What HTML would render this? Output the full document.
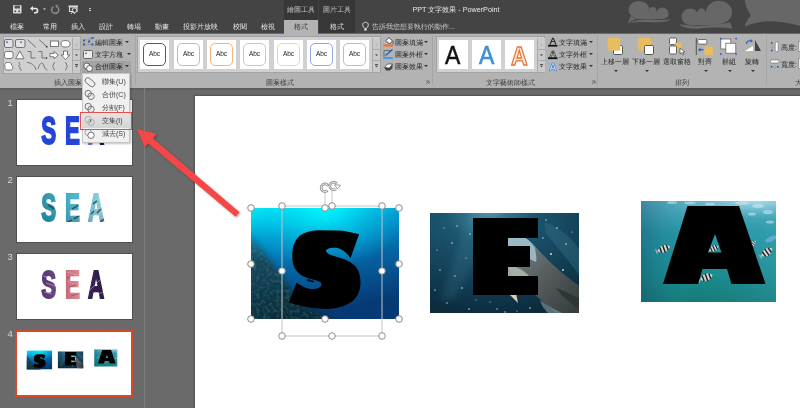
<!DOCTYPE html>
<html><head><meta charset="utf-8">
<style>
*{margin:0;padding:0;box-sizing:border-box}
html,body{width:800px;height:408px;overflow:hidden;background:#6a6a6a;font-family:"Liberation Sans",sans-serif}
#root{position:absolute;left:0;top:0;width:800px;height:408px;will-change:transform}
.a{position:absolute}
.tab{position:absolute;top:22px;font-size:7px;line-height:9px;color:#e6e6e6;white-space:nowrap}
.rt{position:absolute;font-size:7px;line-height:9px;color:#1e1e1e;white-space:nowrap;font-weight:500}
.gl{position:absolute;top:78px;font-size:7px;line-height:9px;color:#3a3a3a;white-space:nowrap}
.vdiv{position:absolute;top:35px;width:1px;height:50px;background:#a5a5a5}
.gal{position:absolute;background:#d0d0d0;border:1px solid #a4a4a4;border-top:1.6px solid #a0a0a0}
.tile{position:absolute;top:40px;width:29px;height:29px;background:#fff}
.tile i{position:absolute;left:3px;top:3px;width:23px;height:23px;border-radius:5px;border:1px solid #555;font-style:normal;font-size:6.5px;line-height:20px;text-align:center;color:#1a1a1a}
.scr{position:absolute;width:8px;background:#cacaca;border-left:1px solid #a8a8a8}
.thumb{position:absolute;left:15.5px;width:117.5px;height:67.5px;background:#fff;border:1.5px solid #505050;overflow:hidden}
.num{position:absolute;left:7.5px;font-size:9.5px;line-height:10px;color:#d8d8d8}
.tl{position:absolute;font-weight:bold;font-size:40px;line-height:40px;transform-origin:0 0;color:#2244d8}
.clip{-webkit-background-clip:text;background-clip:text;color:transparent}
.dd{position:absolute;width:0;height:0;border-left:2px solid transparent;border-right:2px solid transparent;border-top:2px solid #333}
</style></head><body><div id="root">
<div class="a" style="left:0;top:0;width:800px;height:33px;background:#444"></div>
<svg class="a" style="left:600px;top:0" width="200" height="33" viewBox="600 0 200 33">
<g fill="#676767">
<ellipse cx="639" cy="9.8" rx="10.5" ry="8.8"/><circle cx="652.8" cy="10.5" r="3.4"/><ellipse cx="662.4" cy="13.4" rx="6.2" ry="5.8"/>
<path d="M636,12 H664 V19 H636 Z"/>
<path d="M631,16 L636,19 C634,20 630,21.5 628,23 C628.5,20.5 629.5,18 631,16 Z"/>
<path d="M628,23 C635,19.5 645,19 655,19.8 C662,20.3 667,20 670.6,19.3 C669,21.5 662,22.6 652,22.2 C642,21.8 634,22 628,23 Z"/>
<ellipse cx="690.1" cy="16.8" rx="8.6" ry="8.2"/><circle cx="701.5" cy="11.8" r="3.5"/><ellipse cx="719" cy="12.2" rx="13.1" ry="11.4"/>
<path d="M690,12 H722 V25 H690 Z"/>
<path d="M679,24.3 C690,26 700,26 712,25 C722,24 728,23 730,22 C731,25 732,27 732.5,28.6 C722,27.5 712,27 700,28.5 C690,29.5 683,28 679,24.3 Z"/>
<path d="M745,0 H800 V26 C790,23 775,20.5 764,21.5 C755,22.5 748,25 745,26.5 C745.5,22 749,18 751,15 C748,11 745,6 745,0 Z"/>
</g>
</svg>
<div class="a" style="left:284px;top:0;width:34px;height:33px;background:#373737"></div>
<div class="a" style="left:319px;top:0;width:36px;height:33px;background:#373737"></div>
<div class="a" style="left:284px;top:19.5px;width:34px;height:15px;background:#b3b3b3"></div>
<div class="tab" style="left:287px;top:5px;color:#c4c4c4">繪圖工具</div>
<div class="tab" style="left:323px;top:5px;color:#c4c4c4">圖片工具</div>
<div class="tab" style="left:10px;">檔案</div>
<div class="tab" style="left:43px;">常用</div>
<div class="tab" style="left:71px;">插入</div>
<div class="tab" style="left:99px;">設計</div>
<div class="tab" style="left:127px;">轉場</div>
<div class="tab" style="left:155px;">動畫</div>
<div class="tab" style="left:183px;">投影片放映</div>
<div class="tab" style="left:233px;">校閱</div>
<div class="tab" style="left:261px;">檢視</div>
<div class="tab" style="left:330px;">格式</div>
<div class="tab" style="left:294px;color:#333">格式</div>
<div class="tab" style="left:372px;color:#c8c8c8">告訴我您想要執行的動作...</div>
<div class="tab" style="left:412.5px;top:4.8px;color:#e8e8e8;font-size:7.2px">PPT 文字效果 - PowerPoint</div>
<svg class="a" style="left:0;top:0" width="380" height="33" viewBox="0 0 380 33">
<g>
<rect x="13" y="5" width="8.5" height="8.5" rx="1" fill="#dcdcdc"/>
<rect x="14.5" y="5.5" width="5.5" height="3" fill="#555"/>
<rect x="14.5" y="10.5" width="1.6" height="1.6" fill="#444"/><rect x="18.3" y="10.5" width="1.6" height="1.6" fill="#444"/>
<path d="M31.5,8.5 H35.5 C38,8.5 38.5,12.5 35.5,12.8 H34" fill="none" stroke="#e8e8e8" stroke-width="1.6"/>
<path d="M30,8.5 L33,6 L33,11 Z" fill="#e8e8e8"/>
<path d="M43,8.5 H46 L44.5,10 Z" fill="#ddd"/>
<path d="M57.5,7 A3.6,3.6 0 1 1 53.5,6.6" fill="none" stroke="#8c8c8c" stroke-width="1.5"/>
<path d="M55.5,4.5 L58.5,5.5 L56,8 Z" fill="#8c8c8c"/>
<rect x="68.5" y="5.5" width="9.5" height="1.4" fill="#e0e0e0"/>
<path d="M69.5,7 H77 V11.5 H69.5 Z" fill="none" stroke="#e0e0e0" stroke-width="1.1"/>
<circle cx="74.5" cy="10.2" r="2.3" fill="#444" stroke="#e0e0e0" stroke-width="1"/>
<path d="M71,14 L73,11.5 L75,14" fill="none" stroke="#e0e0e0" stroke-width="1"/>
<rect x="89" y="8.2" width="2" height="0.9" fill="#ddd"/><rect x="89" y="10" width="2" height="0.9" fill="#ddd"/>
<path d="M364.5,28.3 C362,26.3 362,22.3 365.5,22.3 C369,22.3 369,26.3 366.5,28.3 Z" fill="none" stroke="#e0e0e0" stroke-width="1"/>
<rect x="364.3" y="28.8" width="2.4" height="1.8" fill="#e0e0e0"/>
</g>
</svg>
<div class="a" style="left:0;top:33.6px;width:800px;height:54.4px;background:#b3b3b3"></div>
<div class="gl" style="left:54px">插入圖案</div>
<div class="gl" style="left:266px">圖案樣式</div>
<div class="gl" style="left:486px">文字藝術師樣式</div>
<div class="gl" style="left:675px">排列</div>
<div class="gl" style="left:795px">大</div>
<div class="vdiv" style="left:135px"></div>
<div class="vdiv" style="left:432px"></div>
<div class="vdiv" style="left:597px"></div>
<div class="vdiv" style="left:766px"></div>
<div class="gal" style="left:3px;top:36.2px;width:78px;height:37.8px"></div>
<div class="scr" style="left:72px;top:38px;height:35px"></div>
<div class="a" style="left:73px;top:49px;width:7px;height:1px;background:#aaa"></div>
<div class="a" style="left:73px;top:60px;width:7px;height:1px;background:#aaa"></div>
<div class="a" style="left:82px;top:61px;width:49px;height:13px;background:#a3a3a3"></div>
<div class="rt" style="left:95px;top:38px">編輯圖案</div>
<div class="rt" style="left:95px;top:50px">文字方塊</div>
<div class="rt" style="left:95px;top:62px">合併圖案</div>
<div class="gal" style="left:137px;top:36.2px;width:244px;height:36.8px"></div>
<div class="scr" style="left:372px;top:38px;height:34px"></div>
<div class="a" style="left:373px;top:49px;width:7px;height:1px;background:#aaa"></div>
<div class="a" style="left:373px;top:60px;width:7px;height:1px;background:#aaa"></div>
<div class="tile" style="left:140px"><i style="border-color:#595959">Abc</i></div>
<div class="tile" style="left:174px"><i style="border-color:#9dc3e6">Abc</i></div>
<div class="tile" style="left:207px"><i style="border-color:#f4b183">Abc</i></div>
<div class="tile" style="left:240px"><i style="border-color:#c9c9c9">Abc</i></div>
<div class="tile" style="left:274px"><i style="border-color:#ffd966">Abc</i></div>
<div class="tile" style="left:307px"><i style="border-color:#8faadc">Abc</i></div>
<div class="tile" style="left:340px"><i style="border-color:#a9d18e">Abc</i></div>
<div class="rt" style="left:395px;top:38px">圖案填滿</div>
<div class="rt" style="left:395px;top:50px">圖案外框</div>
<div class="rt" style="left:395px;top:62px">圖案效果</div>
<div class="gal" style="left:436px;top:36.2px;width:109px;height:36.8px"></div>
<div class="scr" style="left:537px;top:38px;height:34px"></div>
<div class="a" style="left:538px;top:49px;width:7px;height:1px;background:#aaa"></div>
<div class="a" style="left:538px;top:60px;width:7px;height:1px;background:#aaa"></div>
<div class="tile" style="left:439px"></div>
<div class="tile" style="left:472px"></div>
<div class="tile" style="left:505px"></div>
<div class="rt" style="left:559px;top:38px">文字填滿</div>
<div class="rt" style="left:559px;top:50px">文字外框</div>
<div class="rt" style="left:559px;top:62px">文字效果</div>
<div class="rt" style="left:601px;top:57px">上移一層</div>
<div class="rt" style="left:632px;top:57px">下移一層</div>
<div class="rt" style="left:663px;top:57px">選取窗格</div>
<div class="rt" style="left:698px;top:57px">對齊</div>
<div class="rt" style="left:722px;top:57px">群組</div>
<div class="rt" style="left:745px;top:57px">旋轉</div>
<div class="rt" style="left:781px;top:43px">高度:</div>
<div class="rt" style="left:781px;top:60px">寬度:</div>
<div class="a" style="left:798px;top:41px;width:4px;height:11px;background:#e8e8e8;border:1px solid #999"></div>
<div class="a" style="left:798px;top:58px;width:4px;height:11px;background:#e8e8e8;border:1px solid #999"></div>
<div class="dd" style="left:124.5px;top:41px"></div>
<div class="dd" style="left:127px;top:53px"></div>
<div class="dd" style="left:124.5px;top:65px"></div>
<div class="dd" style="left:424px;top:41px"></div>
<div class="dd" style="left:424px;top:53px"></div>
<div class="dd" style="left:424px;top:65px"></div>
<div class="dd" style="left:589px;top:41px"></div>
<div class="dd" style="left:589px;top:53px"></div>
<div class="dd" style="left:589px;top:65px"></div>
<div class="dd" style="left:614px;top:69.5px"></div>
<div class="dd" style="left:645px;top:69.5px"></div>
<div class="dd" style="left:703.5px;top:69.5px"></div>
<div class="dd" style="left:727.5px;top:69.5px"></div>
<div class="dd" style="left:751px;top:69.5px"></div>
<svg class="a" style="left:0;top:33px" width="800" height="55" viewBox="0 33 800 55">
<g stroke="#626262" stroke-width="0.85" fill="#fff">
<!-- row1 -->
<rect x="4.5" y="39.5" width="8.5" height="8" rx="1.5" fill="#e2e2e2"/>
<path d="M6,43 L7,40.5 L8,43 Z" fill="#2a6cc0" stroke="none"/>
<rect x="15.5" y="39.5" width="9.5" height="8" rx="1.5" fill="#e2e2e2"/>
<path d="M20,43 L21,40.5 L22,43 Z" fill="#2a6cc0" stroke="none"/>
<path d="M27.5,39.5 L36,47.5" fill="none"/>
<path d="M39,39.5 L46.5,46.5" fill="none"/>
<circle cx="46.7" cy="46.7" r="0.9" fill="#333" stroke="none"/>
<rect x="50.5" y="41" width="8" height="5.5"/>
<ellipse cx="65.5" cy="43.8" rx="4.5" ry="3.3"/>
<!-- row2 -->
<rect x="4.5" y="51.5" width="8.5" height="7" rx="2"/>
<path d="M19.8,51 L24,58.8 H15.6 Z"/>
<path d="M27.5,51.5 H31 V58 H35.5" fill="none"/>
<path d="M38.5,51.5 H42 V58 H46" fill="none"/>
<path d="M46,56.8 L47.5,58 L46,59.2 Z" fill="#333" stroke="none"/>
<path d="M50,53.5 H54 V51.5 L58.3,55.2 L54,58.8 V56.8 H50 Z"/>
<path d="M63.5,51 H67.5 V55 H69.8 L65.5,59.5 L61.2,55 H63.5 Z"/>
<!-- row3 -->
<path d="M5,67 C4,63.5 6,62 8.5,62.5 C10,62.5 12,63 11.5,65 C13,65.5 13.5,69 11.5,70 H6 C5,70 5,68 5,67 Z"/>
<path d="M19.5,62 C18,63.5 21,64 19,65.5 C17.5,67 21.5,66.5 20,68.5 C19,69.5 21.5,70 22,70.5" fill="none"/>
<path d="M27,62.5 C31,62.5 35,65.5 36,70" fill="none"/>
<path d="M38,69 C40,62 42.5,61.5 44,66 C45,69 46.5,70 47.5,70" fill="none"/>
<path d="M55,62.5 C53,62.5 54,65.5 52.5,66.3 C54,67 53,70 55,70" fill="none"/>
<path d="M65,62.5 C67,62.5 66,65.5 67.5,66.3 C66,67 67,70 65,70" fill="none"/>
</g>
<g fill="#777">
<path d="M75,45.5 H78 L76.5,44 Z" fill="#aaa"/>
<path d="M75,54.5 H78 L76.5,56 Z" fill="#333"/>
<rect x="75" y="64" width="3" height="0.8" fill="#333"/><path d="M75,65.8 H78 L76.5,67.3 Z" fill="#333"/>
<path d="M375,45.5 H378 L376.5,44 Z" fill="#aaa"/>
<path d="M375,54.5 H378 L376.5,56 Z" fill="#333"/>
<rect x="375" y="64" width="3" height="0.8" fill="#333"/><path d="M375,65.8 H378 L376.5,67.3 Z" fill="#333"/>
<path d="M540,45.5 H543 L541.5,44 Z" fill="#aaa"/>
<path d="M540,54.5 H543 L541.5,56 Z" fill="#333"/>
<rect x="540" y="64" width="3" height="0.8" fill="#333"/><path d="M540,65.8 H543 L541.5,67.3 Z" fill="#333"/>
</g>
<!-- edit shape -->
<path d="M84,40.5 L92.5,38 L89,41.5 L92.5,44.5 H84 Z" fill="none" stroke="#777" stroke-width="0.8" stroke-dasharray="1 1"/>
<g fill="#1e64c0"><rect x="83" y="39.5" width="2" height="2"/><rect x="91.5" y="37" width="2" height="2"/><rect x="88" y="40.5" width="2" height="2"/><rect x="83" y="43.5" width="2" height="2"/><rect x="91.5" y="43.5" width="2" height="2"/></g>
<!-- text box -->
<rect x="83.5" y="50.5" width="9" height="8" rx="1" fill="#ececec" stroke="#666"/>
<path d="M85,54 L86,51.5 L87,54 Z" fill="#2a6cc0"/>
<!-- merge -->
<circle cx="86.8" cy="66" r="3" fill="#f2f2f2" stroke="#555" stroke-width="0.9"/>
<circle cx="89.5" cy="68.5" r="3" fill="#f2f2f2" stroke="#555" stroke-width="0.9"/>
<!-- shape fill -->
<path d="M386,40.5 L389,37.5 L392.5,41 L389.5,44 Z" fill="#fff" stroke="#333" stroke-width="0.9"/>
<path d="M392.5,41 C394,42.5 393.5,44 392.5,44" fill="none" stroke="#1e64c0" stroke-width="1"/>
<rect x="383.5" y="44.5" width="9.5" height="2" fill="#f07020"/>
<!-- shape outline -->
<path d="M384,57 V50.5 H391" fill="none" stroke="#666" stroke-width="0.9"/>
<path d="M385.5,55.5 L392.5,49.5" stroke="#1e64c0" stroke-width="1.5"/>
<rect x="383.5" y="57" width="9.5" height="2" fill="#4a9ae0"/>
<!-- shape effects -->
<path d="M384.5,68 L387.5,64 H392.5 V68 L390,70.5 H386 Z" fill="#444"/>
<path d="M384.5,67.5 L387.5,64 H392.5 L389.5,68 Z" fill="#fafafa" stroke="#444" stroke-width="0.7"/>
<!-- text fill -->
<text x="553" y="44" text-anchor="middle" font-family="Liberation Sans" font-size="9.6" fill="#111" stroke="#111" stroke-width="0.3">A</text>
<rect x="548" y="44.8" width="9.5" height="1.8" fill="#111"/>
<!-- text outline -->
<text x="553" y="57" text-anchor="middle" font-family="Liberation Sans" font-weight="bold" font-size="9.6" fill="#fff" stroke="#111" stroke-width="0.6">A</text>
<rect x="548" y="57.3" width="9.5" height="1.8" fill="#111"/>
<!-- text effects -->
<text x="553" y="71" text-anchor="middle" font-family="Liberation Sans" font-weight="bold" font-size="11" fill="none" stroke="#9cc4ec" stroke-width="1.8">A</text>
<text x="553" y="71" text-anchor="middle" font-family="Liberation Sans" font-weight="bold" font-size="11" fill="#e4eef8" stroke="#2a64b8" stroke-width="0.6">A</text>
<!-- bring forward -->
<rect x="613.5" y="45.5" width="9" height="9" rx="1.2" fill="#fff" stroke="#555"/>
<rect x="607.5" y="38" width="12.8" height="12.6" fill="#e8bc60"/>
<!-- send backward -->
<rect x="638.3" y="38" width="12.6" height="12.6" fill="#e8bc60"/>
<rect x="644.5" y="45.5" width="9" height="9" rx="1.2" fill="#fff" stroke="#555"/>
<!-- selection pane -->
<rect x="669.5" y="38" width="7" height="6.5" rx="1" fill="#fff" stroke="#555" stroke-width="0.9"/>
<rect x="674.5" y="42.8" width="7" height="6.8" fill="#e8bc60"/>
<rect x="669.5" y="46" width="7" height="8" rx="1" fill="#fff" stroke="#555" stroke-width="0.9"/>
<path d="M680,48 L680,54 L681.5,52.5 L683,55 L684,54.5 L682.8,52 L684.8,52 Z" fill="#fff" stroke="#333" stroke-width="0.6"/>
<!-- align -->
<rect x="695.8" y="38" width="0.9" height="17" fill="#444"/>
<rect x="697.8" y="39.5" width="9" height="4.6" rx="1" fill="#fff" stroke="#555" stroke-width="0.8"/>
<rect x="704.5" y="46.5" width="8.5" height="8.5" fill="#e8bc60"/>
<path d="M703.5,49.8 H699.5" stroke="#1e64c0" stroke-width="1.3"/>
<path d="M698,49.8 L700.5,47.8 V51.8 Z" fill="#1e64c0"/>
<!-- group -->
<rect x="720.8" y="39" width="10" height="10" fill="#fff" stroke="#666" stroke-width="0.8"/>
<rect x="725.8" y="43.2" width="10" height="10" fill="#fff" stroke="#666" stroke-width="0.8"/>
<g fill="#1e64c0"><rect x="720" y="37.8" width="1.6" height="1.6"/><rect x="735.3" y="37.8" width="1.6" height="1.6"/><rect x="720" y="53.2" width="1.6" height="1.6"/><rect x="735.3" y="53.2" width="1.6" height="1.6"/></g>
<!-- rotate -->
<path d="M746.5,44 C746.5,41.5 748.5,40.5 751,40.8" fill="none" stroke="#1e64c0" stroke-width="1.2"/>
<path d="M750.5,39 L753,41 L750.5,42.6 Z" fill="#1e64c0"/>
<path d="M745,51 L753,46 V51 Z" fill="#fff"/>
<path d="M755,40 L761,51 H755 Z" fill="#444"/>
<!-- size -->
<g fill="#1e64c0"><circle cx="771.8" cy="43" r="1"/><circle cx="771.8" cy="50.5" r="1"/><circle cx="771.5" cy="61.5" r="0"/></g>
<circle cx="771.8" cy="46.8" r="1" fill="#fff" stroke="#555" stroke-width="0.5"/>
<rect x="775.2" y="42" width="3" height="9.5" rx="1" fill="#fff" stroke="#666" stroke-width="0.6"/>
<rect x="770.5" y="60" width="8.5" height="3" rx="1" fill="#fff" stroke="#666" stroke-width="0.6"/>
<g fill="#1e64c0"><circle cx="771.5" cy="66.8" r="1"/><circle cx="778" cy="66.8" r="1"/></g>
<circle cx="774.8" cy="66.8" r="1" fill="#fff" stroke="#555" stroke-width="0.5"/>
<!-- dialog launchers -->
<path d="M426,81 H429 V84 M426,84 L429,81" fill="none" stroke="#555" stroke-width="0.7"/>
<path d="M592,81 H595 V84 M592,84 L595,81" fill="none" stroke="#555" stroke-width="0.7"/>
</svg>
<div class="a" style="left:445.3px;top:40.2px;font-size:25.5px;line-height:30px;color:#111;transform:scaleX(0.9);transform-origin:0 0;-webkit-text-stroke:0.5px #111">A</div>
<div class="a" style="left:478.6px;top:40.2px;font-size:25.5px;line-height:30px;color:#3d8fd8;transform:scaleX(0.9);transform-origin:0 0;-webkit-text-stroke:0.6px #3d8fd8">A</div>
<div class="a" style="left:511px;top:40.5px;font-size:25.5px;line-height:30px;font-weight:bold;transform:scaleX(0.9);transform-origin:0 0;color:#fce6d8;-webkit-text-stroke:1.3px #ea7430">A</div>
<div class="a" style="left:0;top:88px;width:800px;height:2px;background:#5e5e5e"></div>
<div class="a" style="left:144px;top:88px;width:1px;height:320px;background:#7d7d7d"></div>
<div class="a" style="left:195px;top:96px;width:605px;height:312px;background:#fff;box-shadow:0 0 0 1.5px #585858"></div>
<div class="num" style="top:97.5px">1</div>
<div class="thumb" style="top:98.5px"></div>
<div class="num" style="top:174.5px">2</div>
<div class="thumb" style="top:175.5px"></div>
<div class="num" style="top:251.5px">3</div>
<div class="thumb" style="top:252.5px"></div>
<svg class="a" style="left:0;top:0" width="145" height="330" viewBox="0 0 145 330">
<defs>
<linearGradient id="t1a" x1="0" y1="0" x2="1" y2="0"><stop offset="0.3" stop-color="#7a78e8"/><stop offset="0.65" stop-color="#1a1460"/></linearGradient>
<linearGradient id="t2g" x1="0" y1="0" x2="1" y2="0.3"><stop offset="0" stop-color="#0f7a94"/><stop offset="0.35" stop-color="#1a9ab8"/><stop offset="0.6" stop-color="#38b4cc"/><stop offset="1" stop-color="#a0dce6"/></linearGradient>
<linearGradient id="t2v" x1="0" y1="0" x2="0" y2="1"><stop offset="0" stop-color="#fff" stop-opacity="0.15"/><stop offset="1" stop-color="#003040" stop-opacity="0.3"/></linearGradient>
<linearGradient id="t3g" x1="0" y1="0" x2="1" y2="0"><stop offset="0" stop-color="#4a3474"/><stop offset="0.28" stop-color="#6a4a80"/><stop offset="0.4" stop-color="#c86a7c"/><stop offset="0.58" stop-color="#d88a90"/><stop offset="0.7" stop-color="#3a2454"/><stop offset="1" stop-color="#2a1a44"/></linearGradient>
<mask id="c2" maskUnits="userSpaceOnUse" x="0" y="0" width="145" height="330">
<text x="41.2" y="221.3" transform="translate(41.2 221.3) scale(0.56 0.98) translate(-41.2 -221.3)" font-family="Liberation Sans" font-weight="bold" font-size="40" fill="#fff" stroke="#fff" stroke-width="2">S</text>
<text x="65" y="221.3" transform="translate(65 221.3) scale(0.56 0.98) translate(-65 -221.3)" font-family="Liberation Sans" font-weight="bold" font-size="40" fill="#fff" stroke="#fff" stroke-width="2">E</text>
<text x="88" y="221.3" transform="translate(88 221.3) scale(0.56 0.98) translate(-88 -221.3)" font-family="Liberation Sans" font-weight="bold" font-size="40" fill="#fff" stroke="#fff" stroke-width="2">A</text>
</mask><mask id="c3" maskUnits="userSpaceOnUse" x="0" y="0" width="145" height="330">
<text x="41.2" y="298.3" transform="translate(41.2 298.3) scale(0.56 0.98) translate(-41.2 -298.3)" font-family="Liberation Sans" font-weight="bold" font-size="40" fill="#fff" stroke="#fff" stroke-width="2">S</text>
<text x="65" y="298.3" transform="translate(65 298.3) scale(0.56 0.98) translate(-65 -298.3)" font-family="Liberation Sans" font-weight="bold" font-size="40" fill="#fff" stroke="#fff" stroke-width="2">E</text>
<text x="88" y="298.3" transform="translate(88 298.3) scale(0.56 0.98) translate(-88 -298.3)" font-family="Liberation Sans" font-weight="bold" font-size="40" fill="#fff" stroke="#fff" stroke-width="2">A</text>
</mask>
</defs>
<text x="41.2" y="144.3" transform="translate(41.2 144.3) scale(0.56 0.98) translate(-41.2 -144.3)" font-family="Liberation Sans" font-weight="bold" font-size="40" fill="#2346d8" stroke="#2346d8" stroke-width="2">S</text>
<text x="65" y="144.3" transform="translate(65 144.3) scale(0.56 0.98) translate(-65 -144.3)" font-family="Liberation Sans" font-weight="bold" font-size="40" fill="#2346d8" stroke="#2346d8" stroke-width="2">E</text>
<text x="88" y="144.3" transform="translate(88 144.3) scale(0.56 0.98) translate(-88 -144.3)" font-family="Liberation Sans" font-weight="bold" font-size="40" fill="url(#t1a)" stroke="url(#t1a)" stroke-width="2">A</text>
<g mask="url(#c2)">
<rect x="38" y="190" width="70" height="36" fill="url(#t2g)"/>
<rect x="38" y="190" width="70" height="36" fill="url(#t2v)"/>
<g stroke="#2a3a44" stroke-width="1.6" opacity="0.75">
<path d="M48,205 L54,209 M72,209 L79,205 M74,219 L80,215 M68,222 L72,220 M93,204 L97,201 M97,213 L101,209 M91,214 L94,211 M100,222 L104,219"/>
</g>
</g>
<g mask="url(#c3)">
<rect x="38" y="266" width="70" height="36" fill="url(#t3g)"/>
<g stroke="#f0a0a8" stroke-width="1" opacity="0.6">
<path d="M43,276 L52,278 M46,283 L55,286 M44,292 L52,294 M67,272 L77,275 M68,281 L74,284 M70,290 L78,293 M90,290 L100,280 M95,296 L103,292"/>
</g>
<g stroke="#5a3a6a" stroke-width="1" opacity="0.5">
<path d="M67,278 L73,276 M69,287 L76,285 M71,296 L78,294"/>
</g>
</g>
</svg>
<div class="num" style="top:328.5px">4</div>
<div class="thumb" style="top:329.5px;left:15px;width:117.5px;height:67.5px;border:2px solid #d44a2a">
<svg class="a" style="left:-2px;top:-2px" width="117" height="67" viewBox="15 330 117 67"><use href="#slidepics" transform="translate(17 331) scale(0.173) translate(-195 -96)"/></svg>
</div>
<!-- pictures -->
<svg class="a" style="left:0;top:0" width="800" height="408" viewBox="0 0 800 408">
<defs>
<linearGradient id="gS" x1="0" y1="0" x2="0.25" y2="1">
<stop offset="0" stop-color="#00eefa"/><stop offset="0.28" stop-color="#0298cf"/><stop offset="0.6" stop-color="#0563a3"/><stop offset="1" stop-color="#063a74"/></linearGradient>
<radialGradient id="gE" cx="0.4" cy="0" r="1">
<stop offset="0" stop-color="#4a8aa0"/><stop offset="0.3" stop-color="#1c5670"/><stop offset="0.7" stop-color="#123e54"/><stop offset="1" stop-color="#0c2c3e"/></radialGradient>
<linearGradient id="gA" x1="0" y1="0" x2="0" y2="1">
<stop offset="0" stop-color="#5aaec4"/><stop offset="0.3" stop-color="#2896a6"/><stop offset="0.7" stop-color="#1a8c90"/><stop offset="1" stop-color="#167a78"/></linearGradient>
<radialGradient id="gAtop" cx="0.85" cy="0" r="0.6"><stop offset="0" stop-color="#c8eaf4" stop-opacity="0.75"/><stop offset="1" stop-color="#80c8dc" stop-opacity="0"/></radialGradient>
<filter id="sh" x="-10%" y="-10%" width="130%" height="130%"><feDropShadow dx="1" dy="1" stdDeviation="1" flood-color="#000" flood-opacity="0.35"/></filter>
<radialGradient id="gS2" cx="0.5" cy="0" r="0.55">
<stop offset="0" stop-color="#00ffff" stop-opacity="0.9"/><stop offset="1" stop-color="#00c8f0" stop-opacity="0"/></radialGradient>
<linearGradient id="gReef" x1="0" y1="0" x2="0.3" y2="1">
<stop offset="0" stop-color="#1f7088" stop-opacity="0.6"/><stop offset="0.35" stop-color="#15465a"/><stop offset="1" stop-color="#0c2a38"/></linearGradient>
<radialGradient id="glare" cx="0.5" cy="0.3" r="0.5">
<stop offset="0" stop-color="#cfe8f0" stop-opacity="0.9"/><stop offset="0.25" stop-color="#5a9ab0" stop-opacity="0.6"/><stop offset="1" stop-color="#2a6a80" stop-opacity="0"/></radialGradient>
<linearGradient id="gA2" x1="0" y1="0" x2="1" y2="0">
<stop offset="0" stop-color="#163e60" stop-opacity="0.35"/><stop offset="0.4" stop-color="#20a0a8" stop-opacity="0"/><stop offset="1" stop-color="#60b8d0" stop-opacity="0.2"/></linearGradient>
<filter id="tex" x="0" y="0" width="100%" height="100%"><feTurbulence type="fractalNoise" baseFrequency="0.3" numOctaves="3" seed="7"/><feColorMatrix values="0 0 0 0 0.1  0 0 0 0 0.36  0 0 0 0 0.4  0 0 0 -3.2 1.75"/><feGaussianBlur stdDeviation="0.4"/><feComposite in2="SourceGraphic" operator="in"/></filter>
<clipPath id="cS"><rect x="251" y="208" width="148" height="111"/></clipPath>
<clipPath id="cE"><rect x="430" y="213" width="149" height="100"/></clipPath>
<clipPath id="cA"><rect x="641" y="201" width="135" height="101"/></clipPath>
<filter id="blur1" x="-20%" y="-20%" width="140%" height="140%"><feGaussianBlur stdDeviation="3"/></filter>
<linearGradient id="gShark" x1="0" y1="0" x2="1" y2="1"><stop offset="0" stop-color="#7a909a"/><stop offset="0.5" stop-color="#585e5e"/><stop offset="1" stop-color="#343a3c"/></linearGradient>
<filter id="blur05" x="-10%" y="-10%" width="120%" height="120%"><feGaussianBlur stdDeviation="0.7"/></filter>
</defs>
<g id="slidepics">
<!-- S picture -->
<g clip-path="url(#cS)">
<rect x="251" y="208" width="148" height="111" fill="url(#gS)"/>
<rect x="251" y="208" width="148" height="111" fill="url(#gS2)"/>
<path d="M244,230 C258,244 272,262 286,282 C298,300 314,314 345,324 L244,324 Z" fill="url(#gReef)" filter="url(#blur1)"/>
<path d="M251,240 C262,252 275,268 288,288 C300,304 316,314 336,319 L251,319 Z" fill="#000" filter="url(#tex)" opacity="0.25"/>
</g>
<path d="M359.1,234.2 L350.5,258.1 C348,254 342,248 335,247.7 C329,247.5 325.5,249.5 326,251 C326.5,253.5 331,255.5 337,256.9 C345,259 352,262 356,267 C360,272 360.8,279 360.4,284.5 C360,293 356,300 348,304 C340,308 332,309 325,309 L312.4,307.9 C305,307 296,305 288.8,302.5 L296.6,282.7 C300,285 305,288 309.5,288.8 C314,289.5 320,289 321.5,285 C322,282 318,281 313,279.5 C305,277.5 299,275 296,270 C293,266 292.3,262 292.3,255 C292.3,248 294,242 298,237.5 C302,233 310,230.5 318,230.3 L339.5,230.5 C346,231 352,232.5 359.1,234.2 Z" fill="#000"/>
<ellipse cx="310.5" cy="280.8" rx="4" ry="1.1" fill="#02101a" transform="rotate(12 310.5 280.8)"/>
<!-- E picture -->
<g clip-path="url(#cE)">
<rect x="430" y="213" width="149" height="100" fill="url(#gE)"/>
<ellipse cx="486" cy="214" rx="30" ry="14" fill="url(#glare)"/>
<path d="M470,213 L500,213 L455,300 L440,300 Z" fill="#6ab0c8" opacity="0.12" filter="url(#blur1)"/>
<path d="M545,222 C560,228 575,240 579,250 L579,275 C570,262 555,245 545,232 Z" fill="#3a7a90" opacity="0.35" filter="url(#blur05)"/>
<g filter="url(#blur05)">
<path d="M507,240 C515,234 527,236 535,246 C545,258 560,272 579,286 L579,313 L556,313 C545,303 532,292 520,284 C510,276 505,258 507,240 Z" fill="url(#gShark)"/>
<path d="M508,238 C516,232 528,236 535,248 C536,255 537,260 536,262 C528,258 516,252 508,246 Z" fill="#9fc0cc" opacity="0.9"/>
<path d="M507,264 C515,266 524,270 530,277 L508,277 Z" fill="#b0bcb0" opacity="0.85"/>
<path d="M556,288 C566,292 574,296 579,298 L579,309 C572,304 562,297 556,288 Z" fill="#2e3436"/>
<path d="M540,300 C548,306 556,310 562,313 L548,313 C544,309 541,305 540,300 Z" fill="#8a9aa0" opacity="0.6"/>
<path d="M510,295 L516,293 L518,303 Z" fill="#d8d0b0"/>
</g>
<g fill="#e8f4f8" opacity="0.9">
<circle cx="452" cy="243" r="0.8"/><circle cx="440" cy="270" r="0.7"/><circle cx="462" cy="288" r="0.8"/><circle cx="447" cy="303" r="0.7"/><circle cx="457" cy="226" r="0.7"/><circle cx="469" cy="309" r="0.8"/><circle cx="497" cy="309" r="0.7"/><circle cx="551" cy="254" r="1"/><circle cx="557" cy="228" r="0.8"/><circle cx="563" cy="270" r="0.9"/><circle cx="543" cy="238" r="0.7"/><circle cx="470" cy="234" r="0.7"/><circle cx="435" cy="290" r="0.7"/><circle cx="530" cy="308" r="0.8"/>
<circle cx="444" cy="228" r="0.6"/><circle cx="466" cy="258" r="0.6"/><circle cx="437" cy="250" r="0.6"/><circle cx="455" cy="276" r="0.7"/><circle cx="476" cy="300" r="0.6"/><circle cx="546" cy="220" r="0.7"/><circle cx="566" cy="244" r="0.8"/><circle cx="572" cy="232" r="0.6"/><circle cx="490" cy="302" r="0.6"/><circle cx="505" cy="312" r="0.7"/><circle cx="517" cy="311" r="0.6"/>
</g>
</g>
<path d="M473,218 H538 V238 H508 V246 H530 V267 H508 V276 H538 V295 H473 Z" fill="#000"/>
<!-- A picture -->
<g clip-path="url(#cA)">
<rect x="641" y="201" width="135" height="101" fill="url(#gA)"/>
<rect x="641" y="201" width="135" height="101" fill="url(#gA2)"/>
<rect x="641" y="201" width="135" height="30" fill="url(#gAtop)"/>
<g fill="#d8f0f6" opacity="0.5" filter="url(#blur05)">
<ellipse cx="672" cy="202.5" rx="5" ry="1.5"/><ellipse cx="690" cy="203" rx="6" ry="1.5"/><ellipse cx="742" cy="203" rx="7" ry="1.8"/><ellipse cx="758" cy="206" rx="6" ry="2"/><ellipse cx="768" cy="212" rx="5" ry="2"/><ellipse cx="752" cy="214" rx="4" ry="1.5"/><ellipse cx="770" cy="222" rx="4" ry="1.5"/><ellipse cx="710" cy="204" rx="5" ry="1.3"/>
</g>
<g transform="translate(663.5 249) rotate(-20) scale(1.0)">
<path d="M-8,-3.5 L-5.5,0 L-8,3.5 Z" fill="#9aa4a0"/>
<path d="M-6,0 C-3,-4.5 3,-5 7,0 C3,5 -3,4.5 -6,0 Z" fill="#d4d8d4"/>
<path d="M-3,-3 V3 M0.5,-3.8 V3.8 M4,-2.8 V2.8" stroke="#1e2426" stroke-width="1.5"/>
</g><g transform="translate(713.5 248.5) rotate(-25) scale(0.8)">
<path d="M-8,-3.5 L-5.5,0 L-8,3.5 Z" fill="#9aa4a0"/>
<path d="M-6,0 C-3,-4.5 3,-5 7,0 C3,5 -3,4.5 -6,0 Z" fill="#d4d8d4"/>
<path d="M-3,-3 V3 M0.5,-3.8 V3.8 M4,-2.8 V2.8" stroke="#1e2426" stroke-width="1.5"/>
</g><g transform="translate(706 277.5) rotate(-20) scale(1.0)">
<path d="M-8,-3.5 L-5.5,0 L-8,3.5 Z" fill="#9aa4a0"/>
<path d="M-6,0 C-3,-4.5 3,-5 7,0 C3,5 -3,4.5 -6,0 Z" fill="#d4d8d4"/>
<path d="M-3,-3 V3 M0.5,-3.8 V3.8 M4,-2.8 V2.8" stroke="#1e2426" stroke-width="1.5"/>
</g><g transform="translate(766.5 252.5) rotate(-35) scale(1.0)">
<path d="M-8,-3.5 L-5.5,0 L-8,3.5 Z" fill="#9aa4a0"/>
<path d="M-6,0 C-3,-4.5 3,-5 7,0 C3,5 -3,4.5 -6,0 Z" fill="#d4d8d4"/>
<path d="M-3,-3 V3 M0.5,-3.8 V3.8 M4,-2.8 V2.8" stroke="#1e2426" stroke-width="1.5"/>
</g><g transform="translate(753 244) rotate(-50) scale(0.6)">
<path d="M-8,-3.5 L-5.5,0 L-8,3.5 Z" fill="#9aa4a0"/>
<path d="M-6,0 C-3,-4.5 3,-5 7,0 C3,5 -3,4.5 -6,0 Z" fill="#d4d8d4"/>
<path d="M-3,-3 V3 M0.5,-3.8 V3.8 M4,-2.8 V2.8" stroke="#1e2426" stroke-width="1.5"/>
</g>
<ellipse cx="771" cy="239" rx="6" ry="2.6" fill="#6ab0dc" opacity="0.8" transform="rotate(-25 771 239)"/>
</g>
<path d="M687.5,206 H739 L765.5,284 H731.5 L727,269 H702.5 L698,284 H663 Z M715,234 L708,252.5 H721.5 Z" fill="#000" fill-rule="evenodd"/>
</g>
<!-- text frame -->
<rect x="282" y="206" width="100" height="130" fill="none" stroke="#c4c4c4" stroke-width="1"/>
<line x1="325" y1="191.5" x2="325" y2="208" stroke="#c8c8c8"/>
<line x1="332" y1="189.5" x2="332" y2="206" stroke="#c8c8c8"/>
<g fill="#fff" stroke="#8c8c8c" stroke-width="1">
<circle cx="251" cy="208" r="3.3"/><circle cx="325" cy="208" r="3.3"/><circle cx="399" cy="208" r="3.3"/>
<circle cx="251" cy="264" r="3.3"/><circle cx="399" cy="264" r="3.3"/>
<circle cx="251" cy="319" r="3.3"/><circle cx="325" cy="319" r="3.3"/><circle cx="399" cy="319" r="3.3"/>
<circle cx="282" cy="206" r="3.3"/><circle cx="332" cy="206" r="3.3"/><circle cx="382" cy="206" r="3.3"/>
<circle cx="282" cy="271" r="3.3"/><circle cx="382" cy="271" r="3.3"/>
<circle cx="282" cy="336" r="3.3"/><circle cx="332" cy="336" r="3.3"/><circle cx="382" cy="336" r="3.3"/>
</g>
<g fill="none">
<path d="M327.5,190.5 A3.8,3.8 0 1 1 328.3,186" stroke="#8a8a8a" stroke-width="2.6"/>
<path d="M327.5,190.5 A3.8,3.8 0 1 1 328.3,186" stroke="#fff" stroke-width="0.9"/>
<path d="M336,189 A3.8,3.8 0 1 1 336.8,184" stroke="#8a8a8a" stroke-width="2.6"/>
<path d="M336,189 A3.8,3.8 0 1 1 336.8,184" stroke="#fff" stroke-width="0.9"/>
<path d="M334.5,184.8 L340.5,185.2 L337.5,189 Z" fill="#fff" stroke="#8a8a8a" stroke-width="0.8"/>
</g>
<!-- arrow -->
<polygon points="137,129 156.3,133.7 153,138.6 239.6,212.3 235.5,216.7 148.2,143.3 144.7,147" fill="#f44747" filter="url(#sh)"/>
</svg>


<div class="a" style="left:82px;top:73px;width:48px;height:70px;background:#f0f0f0;border:1px solid #c6c6c6;box-shadow:1px 1px 2px rgba(0,0,0,.25)"></div>
<div class="a" style="left:82px;top:114px;width:48px;height:14px;background:linear-gradient(#e4e4e4,#d4d4d4)"></div>
<div class="rt" style="left:102px;top:77px;color:#3c3c3c">聯集(U)</div>
<div class="rt" style="left:102px;top:90px;color:#3c3c3c">合併(C)</div>
<div class="rt" style="left:102px;top:103px;color:#3c3c3c">分割(F)</div>
<div class="rt" style="left:102px;top:116px;color:#3c3c3c">交集(I)</div>
<div class="rt" style="left:102px;top:129px;color:#3c3c3c">減去(S)</div>
<svg class="a" style="left:80px;top:72px" width="52" height="72" viewBox="80 72 52 72">
<g fill="none" stroke="#6a6a6a" stroke-width="0.9">
<rect x="84.5" y="79.5" width="11" height="5.5" rx="2.75" transform="rotate(40 90 82.2)"/>
<circle cx="88.2" cy="93.5" r="3.2"/><circle cx="91" cy="96.3" r="3.2"/>
<circle cx="88.2" cy="106.5" r="3.2"/><circle cx="91" cy="109.3" r="3.2"/>
<circle cx="88.2" cy="119.5" r="3.2" stroke="#aaa"/><circle cx="91" cy="122.3" r="3.2" stroke="#aaa"/>
<path d="M89.8,119.6 C91,120.5 91,121.5 89.8,122.2" stroke="#444"/>
<circle cx="88.2" cy="132.5" r="3.2" stroke="#999"/><circle cx="91" cy="135.3" r="3.2" fill="#fff"/>
</g>
</svg>
<div class="a" style="left:80.2px;top:112.2px;width:51.6px;height:17.6px;border:1.8px solid #f24848"></div>
</div></body></html>
